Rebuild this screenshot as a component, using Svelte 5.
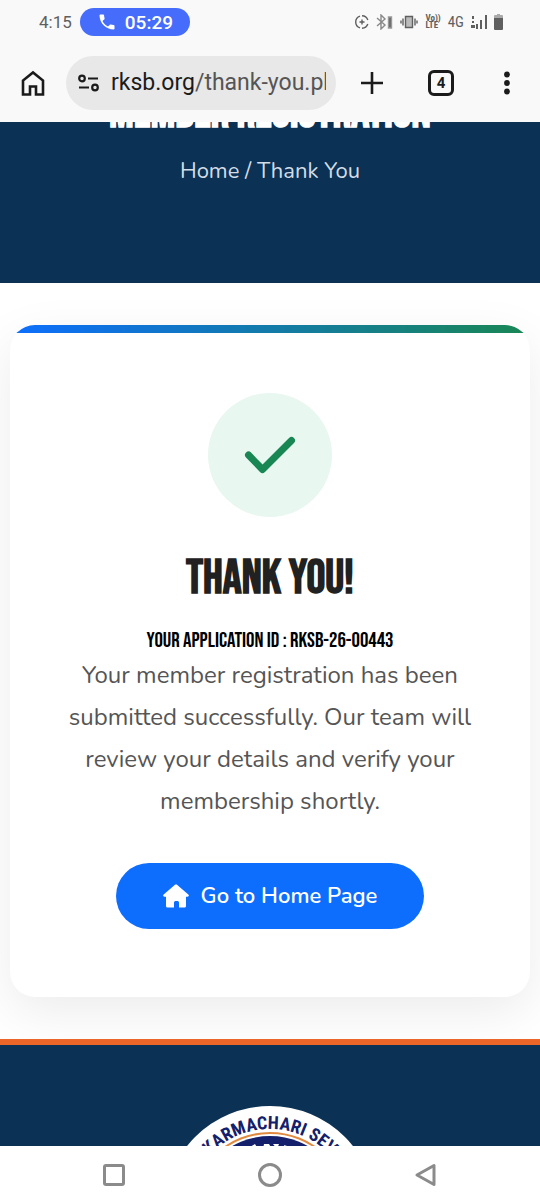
<script lang="ts">
	let applicationId = $state('RKSB-26-00443');
	let openTabs = $state(4);
	let url = $state({ host: 'rksb.org', path: '/thank-you.php' });
</script>

<div class="phone">
	<header class="chrome">
		<div class="status-bar">
			<span class="clock">4:15</span>
			<span class="call-pill">
				<svg width="20" height="20" viewBox="0 0 24 24" fill="currentColor">
					<path d="M6.6 10.8c1.4 2.8 3.8 5.1 6.6 6.6l2.2-2.2c.3-.3.7-.4 1-.2 1.1.4 2.3.6 3.6.6.6 0 1 .4 1 1V20c0 .6-.4 1-1 1C10.6 21 3 13.4 3 4c0-.6.4-1 1-1h3.5c.6 0 1 .4 1 1 0 1.3.2 2.5.6 3.6.1.3 0 .7-.2 1z" />
				</svg>
				05:29
			</span>
			<span class="status-icons">
				<svg width="14" height="14" viewBox="0 0 14 14" fill="none" stroke="currentColor" stroke-width="1.4">
					<path d="M5 1.1a6.2 6.2 0 0 0 0 11.8M7 .8a6.2 6.2 0 0 1 5.8 4.2M12.8 9a6.2 6.2 0 0 1-5.8 4.2M7 4.5v5M4.5 7h5" />
				</svg>
				<svg class="bluetooth" width="17" height="16" viewBox="0 0 17 16" fill="none" stroke="#888" stroke-width="1.4">
					<path d="M1 4l8 7-4 4V1l4 4-8 7" />
					<path d="M12.5 3h3v11h-3z" fill="#666" stroke="#999" />
				</svg>
				<svg width="18" height="14" viewBox="0 0 18 14" fill="none" stroke="currentColor" stroke-width="1.4">
					<path d="M5.5 1.5h7v11h-7z" fill="#bbb" />
					<path d="M3 3.5v7M1 5.5v3M15 3.5v7M17 5.5v3" />
				</svg>
				<span class="volte"><span>Vo))</span><span>LTE</span></span>
				<span class="network">4G</span>
				<svg class="signal" width="16" height="14" viewBox="0 0 16 14" fill="currentColor">
					<path d="M1 1h2v3H1zM1 6h2v2H1zM0 10h4v3H0zM5 9h2v5H5zM9 5h2v9H9zM14 0h2v14h-2z" />
				</svg>
				<svg width="9" height="16" viewBox="0 0 9 16" fill="currentColor">
					<path d="M3 0h3v1h2a1 1 0 0 1 1 1v2H0V2a1 1 0 0 1 1-1h2z" fill="#aaa" />
					<path d="M0 4h9v11a1 1 0 0 1-1 1H1a1 1 0 0 1-1-1z" />
				</svg>
			</span>
		</div>

		<div class="toolbar">
			<button type="button" class="tool" aria-label="Home">
				<svg width="26" height="26" viewBox="0 0 26 26" fill="none" stroke="currentColor" stroke-width="2.6">
					<path d="M3 24.5V10.5L13 2.5l10 8v14h-7v-8h-6v8z" />
				</svg>
			</button>
			<button type="button" class="address">
				<svg width="22" height="18" viewBox="0 0 22 18" fill="none" stroke="currentColor" stroke-width="2.2">
					<circle cx="4" cy="4.5" r="2.8" />
					<path d="M10 4.5h10M1 13.5h10" />
					<circle cx="17" cy="13.5" r="2.8" />
				</svg>
				<span class="url">{url.host}<span class="path">{url.path}</span></span>
			</button>
			<button type="button" class="tool new-tab" aria-label="New tab">
				<svg width="24" height="24" viewBox="0 0 24 24" stroke="currentColor" stroke-width="2.6">
					<path d="M12 1v22M1 12h22" />
				</svg>
			</button>
			<button type="button" class="tool" aria-label="Switch tabs">
				<span class="tab-count">{openTabs}</span>
			</button>
			<button type="button" class="tool" aria-label="Menu">
				<svg width="8" height="24" viewBox="0 0 8 24" fill="currentColor">
					<circle cx="4" cy="3.5" r="2.9" />
					<circle cx="4" cy="12" r="2.9" />
					<circle cx="4" cy="20.5" r="2.9" />
				</svg>
			</button>
		</div>
	</header>

	<main class="viewport">
		<section class="hero">
			<h1>MEMBER REGISTRATION</h1>
			<nav class="breadcrumb"><a href="/">Home</a> / Thank You</nav>
		</section>

		<section class="content">
			<div class="card">
				<div class="check">
					<svg width="52" height="38" viewBox="0 0 52 38" fill="none" stroke="currentColor" stroke-width="7" stroke-linecap="round" stroke-linejoin="round">
						<path d="M4.5 19L18.5 33.5L47.5 4.5" />
					</svg>
				</div>
				<h2>THANK YOU!</h2>
				<h3>YOUR APPLICATION ID : {applicationId}</h3>
				<p>
					Your member registration has been submitted successfully. Our team will review your details
					and verify your membership shortly.
				</p>
				<a href="/" class="home-link">
					<svg width="26" height="24" viewBox="0 0 26 24" fill="currentColor">
						<path d="M12 .7a1.5 1.5 0 0 1 2 0l11.3 9.7c1 .9.5 2.3-.8 2.3h-1.5v9.3a1.5 1.5 0 0 1-1.5 1.5h-5.5v-5a1.5 1.5 0 0 0-1.5-1.5h-2a1.5 1.5 0 0 0-1.5 1.5v5H4.5A1.5 1.5 0 0 1 3 22v-9.3H1.5c-1.3 0-1.8-1.4-.8-2.3z" />
					</svg>
					Go to Home Page
				</a>
			</div>
		</section>

		<footer>
			<svg class="seal" width="212" height="212" viewBox="0 0 212 212">
				<defs>
					<path id="seal-arc" d="M23 106a83 83 0 0 1 166 0" />
				</defs>
				<circle cx="106" cy="106" r="106" fill="#fff" />
				<circle cx="106" cy="106" r="79" fill="none" stroke="#e0893f" stroke-width="2" />
				<circle cx="106" cy="106" r="76" fill="#14206b" />
				<path d="M86 41l5-3 3 5zM100 38h5l3 5h-9zM109 38h6l-2 5zM120 39l6 2-5 3z" fill="#fff" />
				<text class="seal-text" text-anchor="middle">
					<textPath href="#seal-arc" startOffset="50%">KARMACHARI SEV</textPath>
				</text>
			</svg>
		</footer>
	</main>

	<nav class="system-nav">
		<button type="button" aria-label="Recent apps">
			<svg width="24" height="24" viewBox="0 0 24 24"><rect x="2.5" y="2.5" width="19" height="19" rx="1.5" /></svg>
		</button>
		<button type="button" aria-label="Home screen">
			<svg width="24" height="24" viewBox="0 0 24 24"><circle cx="12" cy="12" r="10.5" /></svg>
		</button>
		<button type="button" aria-label="Back">
			<svg width="24" height="24" viewBox="0 0 24 24"><path d="M3 12L20 2.5v19z" /></svg>
		</button>
	</nav>
</div>

<style>
	:global(body) {
		margin: 0;
	}

	.phone {
		display: flex;
		flex-direction: column;
		height: 100vh;
		overflow: hidden;
		background: #fff;
		font-family: Nunito, Lato, 'Open Sans', sans-serif;
	}

	button {
		display: flex;
		align-items: center;
		justify-content: center;
		padding: 0;
		border: none;
		background: none;
		color: inherit;
		cursor: pointer;
	}

	svg {
		display: block;
		flex-shrink: 0;
	}

	.chrome {
		flex-shrink: 0;
		background: #f9f9f9;
		color: #1b1b1b;
		font-family: Roboto, sans-serif;
	}

	.status-bar {
		display: flex;
		align-items: center;
		height: 44px;
		padding: 0 37px 0 39px;
		color: #5f5f5f;
	}

	.clock {
		font-size: 17px;
	}

	.call-pill {
		display: flex;
		align-items: center;
		gap: 8px;
		height: 28px;
		margin-left: 8px;
		padding: 0 17px;
		border-radius: 14px;
		background: #456cfb;
		color: #fff;
		font-size: 19px;
		font-weight: 500;
	}

	.status-icons {
		display: flex;
		align-items: center;
		gap: 7px;
		margin-left: auto;
	}

	.volte {
		display: flex;
		flex-direction: column;
		font-family: 'Roboto Condensed', Roboto, sans-serif;
		font-size: 9px;
		font-weight: 700;
		line-height: 7px;
	}

	.network {
		font-family: 'Roboto Condensed', Roboto, sans-serif;
		font-size: 15px;
	}

	.toolbar {
		display: flex;
		align-items: center;
		height: 78px;
		box-sizing: border-box;
	}

	.tool {
		flex: 0 0 66px;
		height: 56px;
	}

	.new-tab {
		flex-basis: 72px;
	}

	.address {
		flex: 1;
		min-width: 0;
		height: 54px;
		justify-content: flex-start;
		gap: 11px;
		padding: 0 10px 0 12px;
		border-radius: 27px;
		background: #e8e8e8;
	}

	.url {
		flex: 1;
		min-width: 0;
		overflow: hidden;
		font-family: Roboto, sans-serif;
		font-size: 23px;
		line-height: 32px;
		text-align: left;
		white-space: nowrap;
	}

	.path {
		color: #555;
	}

	.tab-count {
		width: 20px;
		height: 20px;
		border: 3px solid currentColor;
		border-radius: 6px;
		font-family: Roboto, sans-serif;
		font-size: 15px;
		font-weight: 700;
		line-height: 20px;
	}

	.viewport {
		flex: 1;
		min-height: 0;
		overflow: hidden;
	}

	/* the page is scrolled, so the title sits mostly under the toolbar */
	.hero {
		margin-top: -29px;
		padding-bottom: 96px;
		background: #0b3154;
		color: #fff;
		text-align: center;
	}

	h1,
	h2,
	h3 {
		margin: 0;
		font-family: 'Bebas Neue', 'Roboto Condensed', 'Liberation Sans', sans-serif;
		font-weight: 700;
	}

	h1 {
		font-size: 46px;
		line-height: 42px;
	}

	.breadcrumb {
		margin-top: 20px;
		color: #d3dde8;
		font-size: 22px;
		line-height: 32px;
	}

	.breadcrumb a {
		color: inherit;
		text-decoration: none;
	}

	.content {
		padding: 42px 10px;
	}

	.card {
		display: flex;
		flex-direction: column;
		align-items: center;
		padding: 68px 50px;
		border-radius: 25px;
		background: linear-gradient(90deg, #0d6efd, #198754) top / 100% 8px no-repeat #fff;
		box-shadow: 0 15px 50px rgba(0, 0, 0, 0.08);
		text-align: center;
	}

	.check {
		display: flex;
		align-items: center;
		justify-content: center;
		width: 124px;
		height: 124px;
		border-radius: 50%;
		background: #e8f7ef;
		color: #198754;
	}

	h2 {
		margin-top: 36px;
		color: #212121;
		font-size: 47px;
		line-height: 52px;
	}

	h3 {
		margin-top: 23px;
		color: #000;
		font-size: 21px;
		font-weight: 500;
		line-height: 26px;
	}

	p {
		margin: 0;
		color: #555;
		font-size: 24px;
		line-height: 42px;
	}

	.home-link {
		display: flex;
		align-items: center;
		gap: 12px;
		height: 66px;
		margin-top: 41px;
		padding: 0 47px;
		border-radius: 33px;
		background: #0d6efd;
		color: #fff;
		font-size: 22px;
		font-weight: 600;
		text-decoration: none;
	}

	footer {
		display: flex;
		justify-content: center;
		padding-top: 61px;
		border-top: 6px solid #eb6628;
		background: #0b3154;
	}

	.seal-text {
		fill: #14206b;
		font-family: 'Roboto Condensed', 'Liberation Sans', sans-serif;
		font-size: 18px;
		font-weight: 700;
	}

	.system-nav {
		display: flex;
		flex-shrink: 0;
		align-items: center;
		justify-content: space-around;
		height: 58px;
		padding: 0 36px;
		background: #fff;
	}

	.system-nav svg {
		fill: none;
		stroke: #8b8b8b;
		stroke-width: 3;
		stroke-linejoin: round;
	}
</style>
